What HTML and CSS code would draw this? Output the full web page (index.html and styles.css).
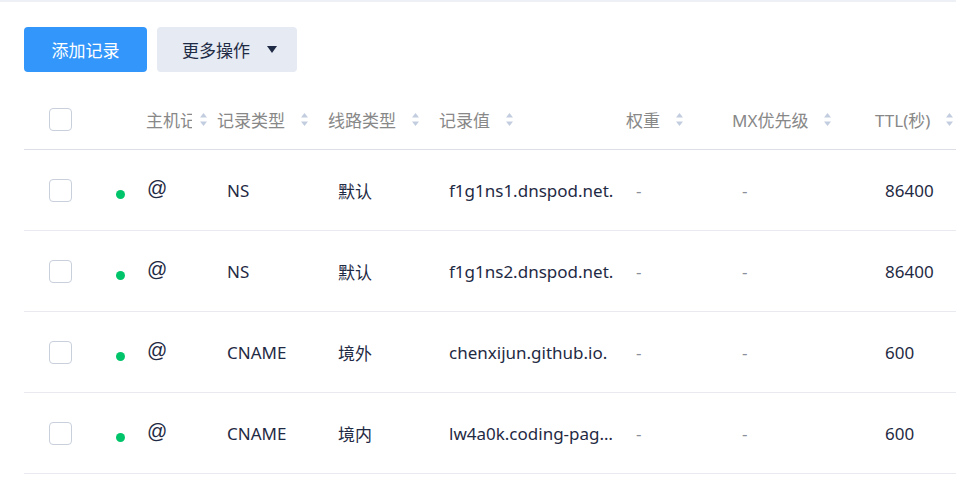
FILE: index.html
```html
<!DOCTYPE html>
<html lang="zh-CN">
<head>
<meta charset="utf-8">
<title>记录管理</title>
<link rel="stylesheet" href="styles.css">
</head>
<body>
<div class="topbar"></div>
<div class="page">
  <div class="toolbar">
    <button class="btn btn-primary">添加记录</button>
    <button class="btn btn-more">更多操作<span class="caret"></span></button>
  </div>
  <div class="table">
    <div class="row head">
      <div class="cell c-check"><span class="checkbox"></span></div>
      <div class="cell c-host"><span class="htext clip">主机记录</span><svg class="sort" viewBox="0 0 7 13" width="7" height="13"><path d="M3.5 0L7 4.5H0Z M0 8.5H7L3.5 13Z"/></svg></div>
      <div class="cell"><span class="htext">记录类型</span><svg class="sort" viewBox="0 0 7 13" width="7" height="13"><path d="M3.5 0L7 4.5H0Z M0 8.5H7L3.5 13Z"/></svg></div>
      <div class="cell"><span class="htext">线路类型</span><svg class="sort" viewBox="0 0 7 13" width="7" height="13"><path d="M3.5 0L7 4.5H0Z M0 8.5H7L3.5 13Z"/></svg></div>
      <div class="cell"><span class="htext">记录值</span><svg class="sort" viewBox="0 0 7 13" width="7" height="13"><path d="M3.5 0L7 4.5H0Z M0 8.5H7L3.5 13Z"/></svg></div>
      <div class="cell"><span class="htext">权重</span><svg class="sort" viewBox="0 0 7 13" width="7" height="13"><path d="M3.5 0L7 4.5H0Z M0 8.5H7L3.5 13Z"/></svg></div>
      <div class="cell"><span class="htext">MX优先级</span><svg class="sort" viewBox="0 0 7 13" width="7" height="13"><path d="M3.5 0L7 4.5H0Z M0 8.5H7L3.5 13Z"/></svg></div>
      <div class="cell"><span class="htext">TTL(秒)</span><svg class="sort" viewBox="0 0 7 13" width="7" height="13"><path d="M3.5 0L7 4.5H0Z M0 8.5H7L3.5 13Z"/></svg></div>
    </div>

    <div class="row body">
      <div class="cell c-check"><span class="checkbox"></span></div>
      <div class="cell c-host"><span class="dot"></span><span class="at">@</span></div>
      <div class="cell">NS</div>
      <div class="cell">默认</div>
      <div class="cell c-value"><span class="ellipsis">f1g1ns1.dnspod.net.</span></div>
      <div class="cell muted">-</div>
      <div class="cell muted">-</div>
      <div class="cell">86400</div>
    </div>

    <div class="row body">
      <div class="cell c-check"><span class="checkbox"></span></div>
      <div class="cell c-host"><span class="dot"></span><span class="at">@</span></div>
      <div class="cell">NS</div>
      <div class="cell">默认</div>
      <div class="cell c-value"><span class="ellipsis">f1g1ns2.dnspod.net.</span></div>
      <div class="cell muted">-</div>
      <div class="cell muted">-</div>
      <div class="cell">86400</div>
    </div>

    <div class="row body">
      <div class="cell c-check"><span class="checkbox"></span></div>
      <div class="cell c-host"><span class="dot"></span><span class="at">@</span></div>
      <div class="cell">CNAME</div>
      <div class="cell">境外</div>
      <div class="cell c-value"><span class="ellipsis">chenxijun.github.io.</span></div>
      <div class="cell muted">-</div>
      <div class="cell muted">-</div>
      <div class="cell">600</div>
    </div>

    <div class="row body">
      <div class="cell c-check"><span class="checkbox"></span></div>
      <div class="cell c-host"><span class="dot"></span><span class="at">@</span></div>
      <div class="cell">CNAME</div>
      <div class="cell">境内</div>
      <div class="cell c-value"><span class="ellipsis">lw4a0k.coding-pages.com.</span></div>
      <div class="cell muted">-</div>
      <div class="cell muted">-</div>
      <div class="cell">600</div>
    </div>
  </div>
</div>
</body>
</html>
```

FILE: styles.css
```css
* { box-sizing: border-box; }

html, body {
  margin: 0;
  padding: 0;
  background: #ffffff;
  overflow: hidden;
}

body {
  font-family: "Noto Sans", "Noto Sans CJK SC", sans-serif;
  font-size: 17px;
  color: #1f2a44;
}

.topbar {
  height: 2px;
  background: #edf0f5;
}

.page {
  padding: 25px 0 0 24px;
}

.toolbar {
  display: flex;
  gap: 10px;
}

.btn {
  height: 45px;
  border: none;
  border-radius: 4px;
  font-family: inherit;
  font-size: 17px;
  padding: 0;
  display: flex;
  align-items: center;
  cursor: pointer;
}

.btn-primary {
  width: 123px;
  justify-content: center;
  background: #3296fa;
  color: #ffffff;
}

.btn-more {
  width: 140px;
  padding-left: 25px;
  background: #e5eaf3;
  color: #1f2a44;
}

.caret {
  margin-left: 17px;
  width: 0;
  height: 0;
  border-left: 5px solid transparent;
  border-right: 5px solid transparent;
  border-top: 7px solid #1f2a44;
}

.table {
  margin-top: 18px;
  width: 1000px;
}

.row {
  display: grid;
  grid-template-columns: 76px 107px 111px 111px 187px 106px 143px 1fr;
  align-items: center;
}

.row.head {
  height: 60px;
  border-bottom: 1px solid #dcdfe6;
  color: #888888;
}

.row.body {
  height: 81px;
  border-bottom: 1px solid #e8eaef;
}

.cell {
  display: flex;
  align-items: center;
  min-width: 0;
  white-space: nowrap;
}

.head .cell { padding-left: 10px; }
.body .cell { padding-left: 20px; }

.head .c-check, .body .c-check { padding-left: 25px; }

.head .c-host { padding-left: 46px; }
.body .c-host { padding-left: 16px; }

.htext { display: inline-block; }
.clip {
  max-width: 46px;
  overflow: hidden;
}

.sort {
  margin-left: 16px;
  fill: #c3cde0;
  flex: none;
}
.c-host .sort { margin-left: 8px; }

.checkbox {
  display: inline-block;
  width: 23px;
  height: 23px;
  border: 1px solid #c9d0dc;
  border-radius: 4px;
  background: #fff;
}

.dot {
  width: 9px;
  height: 9px;
  border-radius: 50%;
  background: #00c46a;
  margin-right: 22px;
  margin-top: 9px;
  flex: none;
}

.at {
  font-family: "Liberation Sans", sans-serif;
  font-size: 20px;
  line-height: 1;
  margin-top: -4px;
}

.c-value { padding-right: 0; }
.ellipsis {
  overflow: hidden;
  text-overflow: ellipsis;
  white-space: nowrap;
  min-width: 0;
}

.muted { color: #8a8f99; }
```
